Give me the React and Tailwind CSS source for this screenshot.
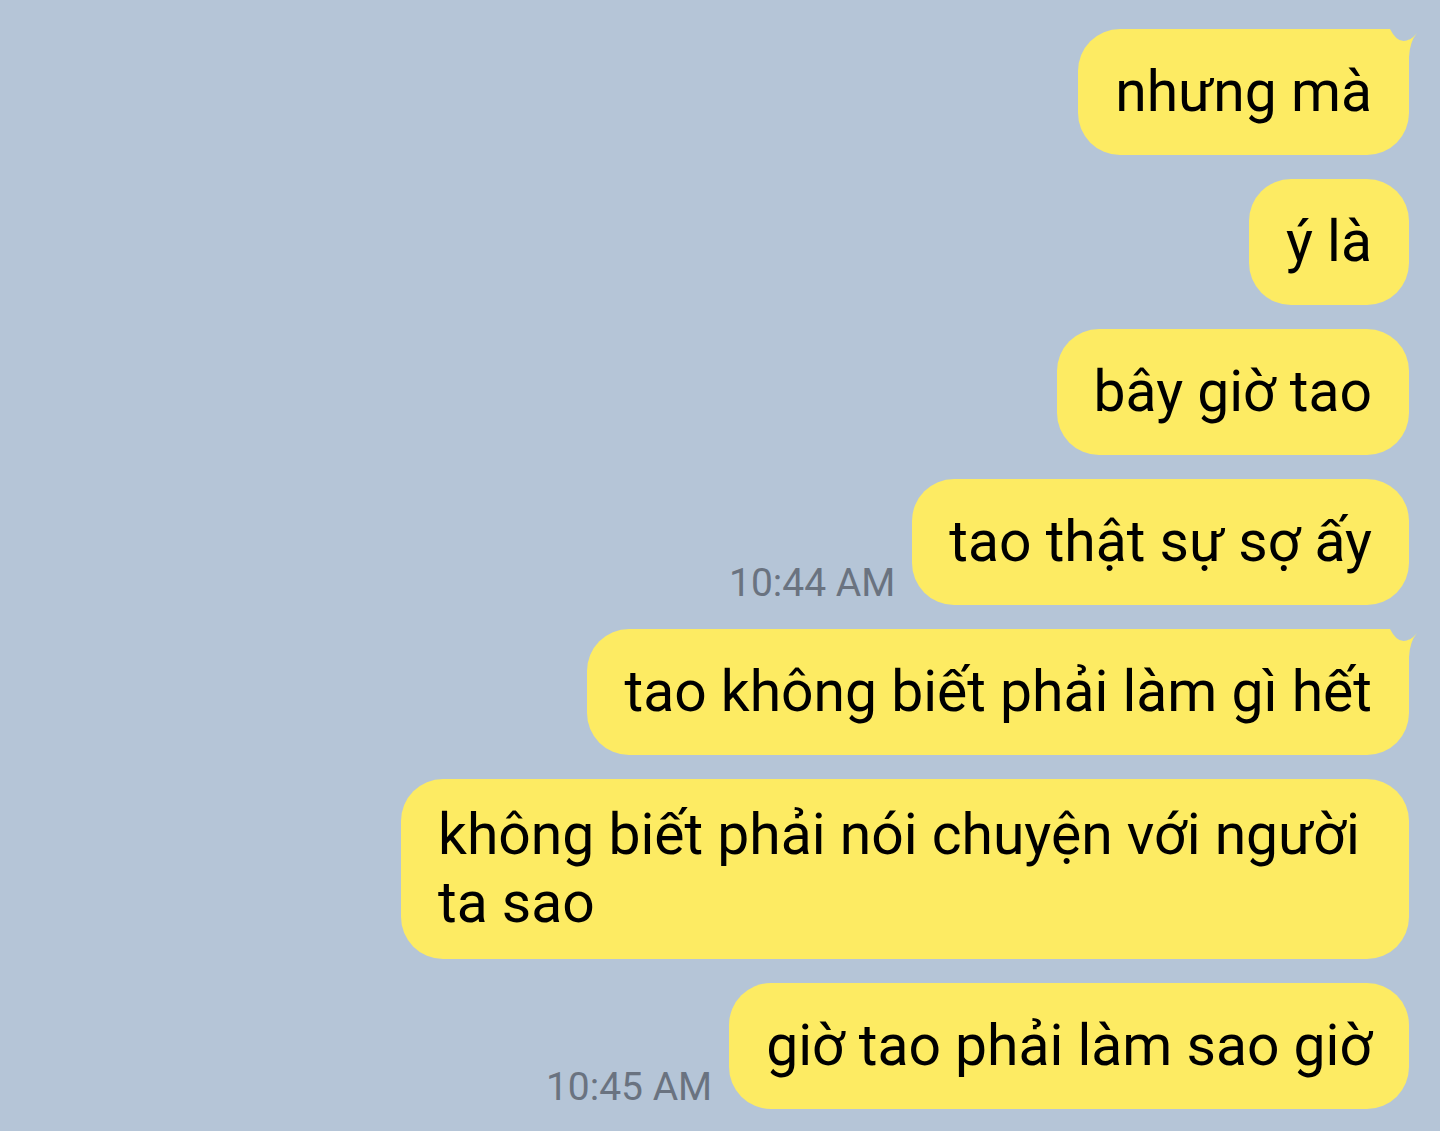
import React from 'react'

const messages = [
  { text: 'nhưng mà', tail: true },
  { text: 'ý là' },
  { text: 'bây giờ tao' },
  { text: 'tao thật sự sợ ấy', time: '10:44 AM' },
  { text: 'tao không biết phải làm gì hết', tail: true },
  { text: 'không biết phải nói chuyện với người ta sao' },
  { text: 'giờ tao phải làm sao giờ', time: '10:45 AM' },
]

function Tail() {
  // little ear on the top-right corner of the first bubble in a group
  return (
    <svg
      className="absolute top-0 right-[-10px] overflow-visible"
      width="40"
      height="42"
      viewBox="0 0 40 42"
    >
      <path d="M11 0 Q22 22 38 4 Q31 12 30 28 L30 42 L11 42 Z" fill="#fdeb63" />
      <path d="M11 0 Q22 22 38 4 L38 0 Z" fill="#b5c5d7" />
    </svg>
  )
}

function Bubble({ text, tail, time }) {
  return (
    <div className="flex items-end justify-end">
      {time && (
        <span className="mr-[17px] mb-[2px] text-[39px] leading-none text-[#6a7380] whitespace-nowrap">
          {time}
        </span>
      )}
      <div
        className={
          tail
            ? 'relative flex min-h-[126px] max-w-[1008px] items-center rounded-[42px] rounded-tr-none bg-[#fdeb63] px-[37px] py-[22px]'
            : 'relative flex min-h-[126px] max-w-[1008px] items-center rounded-[42px] bg-[#fdeb63] px-[37px] py-[22px]'
        }
      >
        {tail && <Tail />}
        <p className="text-[57px] leading-[68px] text-black">{text}</p>
      </div>
    </div>
  )
}

export default function App() {
  return (
    <div
      className="min-h-screen w-full bg-[#b5c5d7] pt-[29px] pr-[31px] flex flex-col items-end gap-[24px]"
      style={{ fontFamily: 'Roboto, "Noto Sans", sans-serif' }}
    >
      {messages.map((m, i) => (
        <Bubble key={i} {...m} />
      ))}
    </div>
  )
}
